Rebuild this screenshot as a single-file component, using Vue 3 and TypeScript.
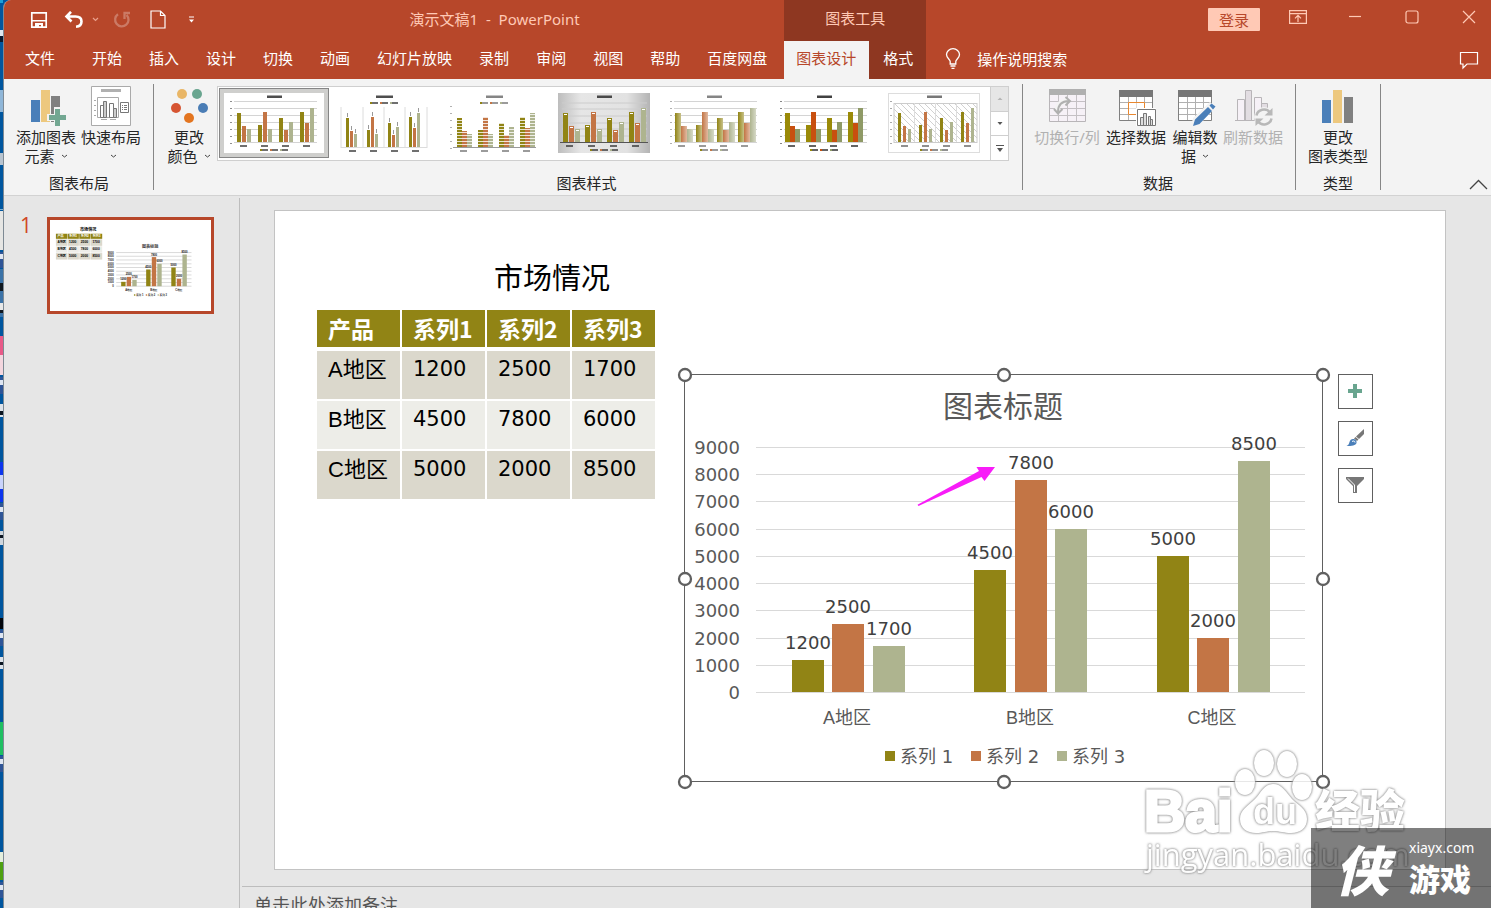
<script setup lang="ts">
import { ref } from 'vue'

interface Tab { label: string; kind?: string }
interface GalleryStyle {
  name: string
  x: number
  w: number
  step: number
  pitch: number
  base: number
  colors: string[]
  grid: 'h' | 'v' | 'none' | 'box'
  top: boolean
  pattern?: 'stripe' | 'notch' | 'fade'
  ink: string
}

const tabs: Tab[] = ['文件', '开始', '插入', '设计', '切换', '动画', '幻灯片放映', '录制', '审阅', '视图', '帮助', '百度网盘']
  .map((label, i) => ({ label, kind: i === 0 ? 'file' : '' }))

const selectedStyle = ref(0)
const notes = ref('')

const colors = ['#918415', '#c37545', '#aeb48f']
const series = ['系列 1', '系列 2', '系列 3']
const headers = ['产品', '系列1', '系列2', '系列3']
const rows = [
  { name: 'A地区', values: [1200, 2500, 1700] },
  { name: 'B地区', values: [4500, 7800, 6000] },
  { name: 'C地区', values: [5000, 2000, 8500] },
]
const ticks = [9000, 8000, 7000, 6000, 5000, 4000, 3000, 2000, 1000, 0]

const BASE = 318
const barH = (v: number) => Math.floor((v * 245) / 9000)
const yOf = (v: number) => BASE - barH(v)
const tickY = (v: number) => BASE - Math.round((v * 245) / 9000)
const barX = (g: number, s: number) => Math.floor(108 + g * 182.5 + s * 40.6)
const groupX = (g: number) => Math.round(163 + g * 182.6)

const handles = [
  [1, 1], [320, 1], [639, 1],
  [1, 205], [639, 205],
  [1, 408], [320, 408], [639, 408],
]

const miniHeights = [[29, 16, 13], [17, 30, 13], [24, 12, 20], [30, 19, 34]]
const strong = ['#9a8a08', '#c8500f', '#8f9a66']
const gallery: GalleryStyle[] = [
  { name: '样式 1', x: 13, w: 4, step: 5, pitch: 21, base: 49, colors, grid: 'h', top: false, ink: '#222' },
  { name: '样式 2', x: 12, w: 3, step: 4, pitch: 21, base: 54, colors, grid: 'v', top: true, ink: '#222' },
  { name: '样式 3', x: 13, w: 5, step: 5, pitch: 21, base: 54, colors, grid: 'none', top: true, pattern: 'stripe', ink: '#666' },
  { name: '样式 4', x: 9, w: 5, step: 6, pitch: 22, base: 49, colors, grid: 'box', top: false, pattern: 'notch', ink: '#222' },
  { name: '样式 5', x: 11, w: 6, step: 6, pitch: 21, base: 49, colors, grid: 'h', top: false, pattern: 'fade', ink: '#666' },
  { name: '样式 6', x: 11, w: 5, step: 5, pitch: 21, base: 49, colors: strong, grid: 'h', top: false, ink: '#111' },
  { name: '样式 7', x: 14, w: 3, step: 5, pitch: 21, base: 49, colors, grid: 'box', top: false, ink: '#555' },
]

const strip = [
  [0, 3, '#1aa0d8'], [30, 10, '#dfe8f0'], [36, 6, '#0a1a30'], [90, 22, '#8fb6d8'], [153, 12, '#b8c4d0'],
  [209, 1, '#7db3d8'], [211, 39, '#e6e6e4'], [252, 16, '#2f5597'], [254, 5, '#dfe6f2'], [269, 48, '#3b73a8'],
  [283, 8, '#101820'], [303, 8, '#e8e8e8'], [310, 3, '#101820'], [336, 20, '#e85a88'], [355, 20, '#f3d6de'],
  [377, 17, '#2f5597'], [380, 5, '#dfe6f2'], [404, 13, '#dde3ea'], [411, 4, '#0a1420'], [462, 40, '#0c35ee'],
  [475, 14, '#c9d3fb'], [503, 17, '#2f5597'], [507, 5, '#dfe6f2'], [531, 14, '#cfd6de'], [535, 3, '#0a1420'],
  [618, 11, '#02060c'], [630, 16, '#2f5597'], [633, 5, '#dfe6f2'], [657, 12, '#dde3ea'], [662, 3, '#0a1420'],
  [722, 33, '#1fbf62'], [756, 16, '#2f5597'], [759, 5, '#dfe6f2'], [852, 12, '#e4eedd'], [862, 18, '#4ea012'],
  [882, 16, '#2f5597'], [885, 5, '#dfe6f2'],
] as [number, number, string][]
</script>

<template>
  <div class="screen">
    <svg class="desktop" viewBox="0 0 3 908" preserveAspectRatio="xMinYMin slice" aria-hidden="true">
      <rect v-for="(s, i) in strip" :key="i" x="0" :y="s[0]" width="3" :height="s[1]" :fill="s[2]" />
    </svg>

    <div class="window">
      <header class="head">
        <div class="head-left">
          <div class="title-row">
            <div class="qat">
              <button type="button" class="q save" aria-label="保存">
                <svg width="18" height="18" viewBox="0 0 18 18"><path d="M1.800 1.800h14.400v14.400H1.800z" fill="none" stroke="#fff" stroke-width="1.700" /><path d="M2 9h14v1.500H2zM5 12h8v5h-2v-3H9v3H5z" fill="#fff" /></svg>
              </button>
              <button type="button" class="q undo" aria-label="撤消">
                <svg width="20" height="18" viewBox="0 0 20 18"><path d="M7 .8 2.500 5.500 7.500 10.500M3 5.500h8.500c4 0 6 2 6 5s-2 5-5.500 5.300" fill="none" stroke="#fff" stroke-width="2.600" /></svg>
              </button>
              <button type="button" class="q more" aria-label="撤消选项">
                <svg width="7" height="5" viewBox="0 0 7 5"><path d="M1 1l2.500 2.500L6 1" fill="none" stroke="#eaa08c" stroke-width="1.200" /></svg>
              </button>
              <button type="button" class="q redo" aria-label="重复" disabled>
                <svg width="18" height="18" viewBox="0 0 18 18"><path d="M5 3.200A6.700 6.700 0 1 0 13.600 4M17 2h-5.500v6" fill="none" stroke="#cb7a65" stroke-width="2.300" /></svg>
              </button>
              <button type="button" class="q doc" aria-label="新建">
                <svg width="16" height="19" viewBox="0 0 16 19"><path d="M1 1h9.500L15 5.500V18H1zM10.500 1v4.500H15" fill="none" stroke="#fff" stroke-width="1.200" /></svg>
              </button>
              <button type="button" class="q custom" aria-label="自定义快速访问工具栏">
                <svg width="7" height="7" viewBox="0 0 7 7"><path d="M1 .5h5v1.100H1zM1 3.500h5L3.500 6.500z" fill="#fff" /></svg>
              </button>
            </div>
            <div class="doc-title">演示文稿1&nbsp; -&nbsp; PowerPoint</div>
          </div>
          <nav class="tab-row">
            <button v-for="t in tabs" :key="t.label" type="button" class="tab" :class="t.kind">{{ t.label }}</button>
          </nav>
        </div>
        <div class="head-context">
          <div class="context-title">图表工具</div>
          <div class="tab-row">
            <button type="button" class="tab active">图表设计</button>
            <button type="button" class="tab">格式</button>
          </div>
        </div>
        <div class="head-right">
          <div class="controls">
            <button type="button" class="login">登录</button>
            <button type="button" class="ctl" aria-label="功能区显示选项">
              <svg width="18" height="14" viewBox="0 0 18 14"><path d="M.6.6h16.800v12.800H.6zM.6 3.600h16.800M9 12V5.500M6 8.300l3-3 3 3" fill="none" stroke="#ffc9b5" stroke-width="1.200" /></svg>
            </button>
            <button type="button" class="ctl" aria-label="最小化">
              <svg width="14" height="14" viewBox="0 0 14 14"><path d="M1 6.500h12" stroke="#ffc9b5" stroke-width="1.200" /></svg>
            </button>
            <button type="button" class="ctl" aria-label="最大化">
              <svg width="14" height="14" viewBox="0 0 14 14"><rect x="1" y="1" width="12" height="12" rx="2" fill="none" stroke="#ffc9b5" stroke-width="1.200" /></svg>
            </button>
            <button type="button" class="ctl" aria-label="关闭">
              <svg width="14" height="14" viewBox="0 0 14 14"><path d="M1 1l12 12M13 1 1 13" stroke="#ffc9b5" stroke-width="1.200" /></svg>
            </button>
          </div>
          <div class="tell-row">
            <button type="button" class="tell">
              <svg width="16" height="22" viewBox="0 0 16 22"><path d="M5.200 16v-2.500C5.200 11.500 1.500 10 1.500 6.500a6.500 5.800 0 0 1 13 0c0 3.500-3.700 5-3.700 7V16zM5.500 18h5M6.500 20.300h3" fill="none" stroke="#fff" stroke-width="1.300" /></svg>
              <span>操作说明搜索</span>
            </button>
            <button type="button" class="comment" aria-label="批注">
              <svg width="20" height="19" viewBox="0 0 20 19"><path d="M1.500 1.500h17v11.500H8L4 17v-4H1.500z" fill="none" stroke="#fff" stroke-width="1.200" /></svg>
            </button>
          </div>
        </div>
      </header>

      <section class="ribbon">
        <div class="group layout">
          <div class="items">
            <button type="button" class="big w64">
              <svg width="40" height="40" viewBox="0 0 40 40"><path d="M5 14h9v22H5z" fill="#4a7fb9" /><path d="M15 4h9v32h-9z" fill="#edc87e" /><path d="M25 10h9v26h-9z" fill="#808080" /><path d="M28 21h7v7h7v7h-7v6h-7v-6h-7v-7h7z" fill="#f3f3f3" /><path d="M29 23h5v6h6v5h-6v6h-5v-6h-6v-5h6z" fill="#72a792" /></svg>
              <span>添加图表</span>
              <span class="l2">元素<svg class="chev" viewBox="0 0 7 5"><path d="M1 1l2.500 2L6 1" /></svg></span>
            </button>
            <button type="button" class="big w66">
              <svg width="40" height="40" viewBox="0 0 40 40"><path d="M.5.500h39v39H.5z" fill="#fff" stroke="#aaa" /><path d="M10 3h20v3H10z" fill="#b0b0b0" /><path d="M6.500 11.500h21v20h-21zM3 14.500h2M3 19.500h2M3 24.500h2M3 29.500h2M10 33.500h6M19 33.500h6" fill="none" stroke="#aaa" /><path d="M9.500 19.500h3v12h-3zM18.500 17.500h4v14h-4z" fill="#fff" stroke="#777" /><path d="M12.500 15.500h3v16h-3zM22.500 22.500h3v9h-3z" fill="#ccc" stroke="#777" /><path d="M29.500 16.500h8v10h-8z" fill="#fff" stroke="#777" /><path d="M31 19.500h1M33 19.500h3M31 21.500h1M33 21.500h3M31 23.500h1M33 23.500h3" stroke="#777" /></svg>
              <span>快速布局</span>
              <span class="l2"><svg class="chev lone" viewBox="0 0 7 5"><path d="M1 1l2.500 2L6 1" /></svg></span>
            </button>
          </div>
          <div class="caption">图表布局</div>
        </div>

        <div class="group styles">
          <div class="items">
            <button type="button" class="big w50">
              <svg width="40" height="40" viewBox="0 0 40 40"><circle cx="13" cy="8" r="5" fill="#e9b666" /><circle cx="28" cy="8" r="5" fill="#69a58f" /><circle cx="7" cy="22" r="5" fill="#d65532" /><circle cx="34" cy="22" r="5" fill="#4a7db5" /><circle cx="20" cy="32" r="5" fill="#e37520" /></svg>
              <span>更改</span>
              <span class="l2">颜色<svg class="chev" viewBox="0 0 7 5"><path d="M1 1l2.500 2L6 1" /></svg></span>
            </button>
            <div class="gallery">
              <button v-for="(g, gi) in gallery" :key="g.name" type="button" class="style-item" :class="{ on: gi === selectedStyle }" :aria-label="g.name" @click="selectedStyle = gi">
                <svg width="100" height="60" viewBox="0 0 100 60">
                  <defs>
                    <linearGradient id="silver" x1="0" x2="1"><stop offset="0" stop-color="#bdbdbd" /><stop offset=".25" stop-color="#e6e6e6" /><stop offset=".75" stop-color="#e2e2e2" /><stop offset="1" stop-color="#b4b4b4" /></linearGradient>
                    <linearGradient id="fade" x1="0" x2="1"><stop offset="0" stop-color="#fff" stop-opacity="0" /><stop offset="1" stop-color="#fff" stop-opacity=".5" /></linearGradient>
                    <pattern id="hatch" width="6" height="6" patternUnits="userSpaceOnUse"><path d="M0 0l6 6" stroke="#ccc" stroke-width=".9" /></pattern>
                  </defs>
                  <rect width="100" height="60" fill="#fff" />
                  <template v-if="gi === 3">
                    <rect x="4" width="92" height="60" fill="url(#silver)" />
                    <path d="M8 10h85M8 16h85M8 23h85M8 30h85M8 36h85M8 43h85" stroke="#ccc" />
                    <path d="M6 49.500h88" stroke="#555" />
                  </template>
                  <template v-if="gi === 6">
                    <rect x="4.500" y=".5" width="91" height="59" fill="#fff" stroke="#ddd" />
                    <rect x="10" y="10.500" width="83" height="39" fill="url(#hatch)" stroke="#ccc" />
                    <path d="M30.500 10v39M51.500 10v39M72.500 10v39" stroke="#ddd" />
                  </template>
                  <path v-if="g.grid === 'h'" d="M10 8.500h83M10 15.500h83M10 22.500h83M10 29.500h83M10 36.500h83M10 42.500h83M10 49.500h83" stroke="#d4d4d4" />
                  <path v-if="g.grid === 'v'" d="M7 14v41M29 14v41M50 14v41M71 14v41M93 14v41M7 54.500h86" stroke="#dcdcdc" />
                  <path v-if="g.grid === 'none'" d="M9 54.500h83" stroke="#999" />
                  <path v-if="gi !== 1 && gi !== 3" d="M7 8v48" :transform="g.top ? 'translate(0 5)' : ''" :stroke="g.ink" stroke-width="2" stroke-dasharray="1 6" opacity=".5" />
                  <template v-for="(hs, k) in miniHeights" :key="k">
                    <template v-for="(h, s) in hs" :key="s">
                      <rect :x="g.x + k * g.pitch + s * g.step" :y="g.base - h" :width="g.w" :height="h" :fill="g.colors[s]" />
                      <rect v-if="g.pattern === 'fade'" :x="g.x + k * g.pitch + s * g.step" :y="g.base - h" :width="g.w" :height="h" fill="url(#fade)" />
                      <rect v-if="g.pattern === 'notch'" :x="g.x + 1 + k * g.pitch + s * g.step" :y="g.base - h + 1" :width="g.w - 2" height="1" fill="#fff" />
                      <path v-if="gi === 1" :d="`M${g.x + 1.5 + k * g.pitch + s * g.step} ${g.base - h - 1}v-4`" stroke="#999" />
                    </template>
                    <rect :x="g.x + 3 + k * g.pitch" :y="g.base + 3" width="7" height="2" :fill="g.ink" opacity=".65" />
                  </template>
                  <path v-if="g.pattern === 'stripe'" d="M10 51.500h84M10 48.500h84M10 45.500h84M10 42.500h84M10 39.500h84M10 36.500h84M10 33.500h84M10 30.500h84M10 27.500h84M10 24.500h84M10 21.500h84" stroke="#fff" stroke-opacity=".8" />
                  <rect :x="g.top ? 42 : 43" y="2.500" :width="g.top ? 17 : 15" height="2.500" :fill="g.ink" opacity=".8" />
                  <g :transform="g.top ? 'translate(0 -47)' : ''">
                    <template v-for="(c, s) in g.colors" :key="c">
                      <rect :x="36 + s * 10" y="56" width="2" height="2" :fill="c" />
                      <rect :x="38 + s * 10" y="56" width="6" height="2" :fill="g.ink" opacity=".65" />
                    </template>
                  </g>
                </svg>
              </button>
              <div class="scroller">
                <button type="button" class="off" aria-label="上一行" disabled><svg width="8" height="5" viewBox="0 0 8 5"><path d="M1.500 4 4 1.500 6.500 4z" fill="#b5b5b5" /></svg></button>
                <button type="button" aria-label="下一行"><svg width="8" height="5" viewBox="0 0 8 5"><path d="M1.500 1h5L4 4z" fill="#555" /></svg></button>
                <button type="button" aria-label="其他"><svg width="10" height="9" viewBox="0 0 10 9"><path d="M1 1h8v1H1zM2 4h6L5 8z" fill="#555" /></svg></button>
              </div>
            </div>
          </div>
          <div class="caption">图表样式</div>
        </div>

        <div class="group data">
          <div class="items">
            <button type="button" class="big w66" disabled>
              <svg width="40" height="40" viewBox="0 0 40 40"><path d="M2.500 3.500h36v32h-36z" fill="#f6f1f7" stroke="#b8b5b8" /><path d="M2 3h37v6H2z" fill="#b0b0b0" /><path d="M11.500 9v26M20.500 9v26M29.500 9v26M3 15.500h35M3 22.500h35M3 29.500h35" stroke="#c4c0c4" /><path d="M10 26c0-7 4-11 11-11" fill="none" stroke="#f3f3f3" stroke-width="5" /><path d="M11 26c0-7 4-11 11-11M18.500 11l4.500 4-4.500 4.500M7 23l4 4.500 4.500-4.500" fill="none" stroke="#b0b0b0" stroke-width="2" /></svg>
              <span>切换行/列</span>
            </button>
            <button type="button" class="big w72">
              <svg width="40" height="40" viewBox="0 0 40 40"><path d="M3.500 4.500h33v30h-33z" fill="#fff" stroke="#808080" /><path d="M3 4h34v7H3z" fill="#777" /><path d="M12.500 11v23M20.500 11v23M28.500 11v23M4 16.500h32M4 22.500h32M4 28.500h32" stroke="#b0b0b0" /><path d="M12.500 16.500h16v12h-16z" fill="#fff" stroke="#e8872f" /><path d="M20.500 17v11M13 22.500h15" stroke="#ddd" /><path d="M20 22h20v18H20z" fill="#fff" /><path d="M21.500 23.500h18v16h-18z" fill="#fff" stroke="#777" /><path d="M24.500 31.500h3v8h-3zM27.500 27.500h3v12h-3zM32.500 30.500h2v9h-2zM34.500 33.500h2v6h-2z" fill="#ddd" stroke="#777" /></svg>
              <span>选择数据</span>
            </button>
            <button type="button" class="big w46">
              <svg width="40" height="40" viewBox="0 0 40 40"><path d="M3.500 4.500h33v30h-33z" fill="#fff" stroke="#808080" /><path d="M3 4h34v7H3z" fill="#777" /><path d="M12.500 11v23M20.500 11v23M28.500 11v23M4 16.500h32M4 22.500h32M4 28.500h32" stroke="#b0b0b0" /><path d="M16 41l2-9 17-16 6 5-16 17z" fill="#f3f3f3" /><path d="M18 40l2-6.500L33 21l4 4-12.500 13zM34.500 19.500l2-2 4 3-2.500 3z" fill="#4a7fb9" /></svg>
              <span>编辑数</span>
              <span class="l2">据<svg class="chev" viewBox="0 0 7 5"><path d="M1 1l2.500 2L6 1" /></svg></span>
            </button>
            <button type="button" class="big w70" disabled>
              <svg width="40" height="40" viewBox="0 0 40 40"><path d="M4.500 13.500h7v21h-7zM21.500 11.500h7v23h-7z" fill="#f6f1f7" stroke="#b8b5b8" /><path d="M12.500 4.500h6v30h-6zM28.500 17.500h6v17h-6z" fill="#e2dde2" stroke="#b8b5b8" /><path d="M2 34.500h34" stroke="#b8b5b8" /><circle cx="31" cy="31" r="10" fill="#f3f3f3" /><path d="M23.500 29.500A7.500 7 0 0 1 37 26.500M38.500 32.500A7.500 7 0 0 1 25 35.500" fill="none" stroke="#b8b8b8" stroke-width="2.500" /><path d="M39.500 22v7.500h-8zM22.500 40v-7.500h8z" fill="#b8b8b8" /></svg>
              <span>刷新数据</span>
            </button>
          </div>
          <div class="caption">数据</div>
        </div>

        <div class="group kind">
          <div class="items">
            <button type="button" class="big w66">
              <svg width="40" height="40" viewBox="0 0 40 40"><path d="M4 14h9v23H4z" fill="#4a7fb9" /><path d="M15 4h9v33h-9z" fill="#edc87e" /><path d="M26 11h9v26h-9z" fill="#808080" /></svg>
              <span>更改</span>
              <span>图表类型</span>
            </button>
          </div>
          <div class="caption">类型</div>
        </div>

        <button type="button" class="collapse" aria-label="折叠功能区">
          <svg width="19" height="11" viewBox="0 0 19 11"><path d="M1 10l8.500-8.500L18 10" fill="none" stroke="#444" stroke-width="1.300" /></svg>
        </button>
      </section>

      <div class="body">
        <aside class="thumbs">
          <span class="num">1</span>
          <button type="button" class="thumb" aria-label="幻灯片 1">
            <svg viewBox="0 0 1172 660" aria-hidden="true">
              <rect width="1172" height="660" fill="#fff" />
              <text x="278" y="80" font-size="30" text-anchor="middle" font-weight="700">市场情况</text>
              <g v-for="(h, i) in headers" :key="h">
                <rect :x="43 + i * 85" y="100" width="82" height="37" fill="#918415" />
                <text :x="54 + i * 85" y="127" font-size="23" font-weight="700" fill="#fff">{{ h }}</text>
              </g>
              <g v-for="(r, k) in rows" :key="r.name">
                <rect v-for="n in 4" :key="n" :x="43 + (n - 1) * 85" :y="141 + k * 50" width="82" height="47" :fill="k === 1 ? '#edede8' : '#dbd8cc'" />
                <text x="54" :y="168 + k * 50" font-size="23" font-weight="700">{{ r.name }}</text>
                <text v-for="(v, j) in r.values" :key="j" :x="139 + j * 85" :y="168 + k * 50" font-size="24" font-weight="700">{{ v }}</text>
              </g>
              <g transform="translate(410 164)">
                <text x="319" y="43" font-size="30" text-anchor="middle" font-weight="700" fill="#444">图表标题</text>
                <g v-for="t in ticks" :key="t">
                  <path :d="`M72 ${tickY(t)}h548`" stroke="#d9d9d9" stroke-width="7" />
                  <text x="55" :y="tickY(t) + 7" font-size="20" text-anchor="end" font-weight="700" fill="#222">{{ t }}</text>
                </g>
                <g v-for="(r, k) in rows" :key="r.name">
                  <rect v-for="(v, s) in r.values" :key="s" :x="barX(k, s)" :y="yOf(v)" width="32" :height="barH(v)" :fill="colors[s]" />
                  <text v-for="(v, s) in r.values" :key="'t' + s" :x="barX(k, s) + 16" :y="yOf(v) - 11" font-size="20" text-anchor="middle" font-weight="700" fill="#111">{{ v }}</text>
                  <text :x="groupX(k)" y="350" font-size="19" text-anchor="middle" font-weight="700" fill="#222">{{ r.name }}</text>
                </g>
                <g v-for="(n, s) in series" :key="n">
                  <rect :x="201 + s * 86" y="377" width="10" height="10" :fill="colors[s]" />
                  <text :x="216 + s * 86" y="389" font-size="19" font-weight="700" fill="#222">{{ n }}</text>
                </g>
              </g>
            </svg>
          </button>
        </aside>

        <main class="editor">
          <div class="stage">
            <div class="slide">
              <h1 class="slide-title">市场情况</h1>
              <table class="sheet">
                <thead>
                  <tr><th v-for="h in headers" :key="h" scope="col">{{ h }}</th></tr>
                </thead>
                <tbody>
                  <tr v-for="r in rows" :key="r.name">
                    <td class="name">{{ r.name }}</td>
                    <td v-for="(v, j) in r.values" :key="j">{{ v }}</td>
                  </tr>
                </tbody>
              </table>
              <svg class="chart" width="639" height="408" viewBox="0 0 639 408">
                <rect x=".5" y=".5" width="638" height="407" fill="#fff" stroke="#606060" />
                <text class="c-title" x="319" y="43">图表标题</text>
                <g v-for="t in ticks" :key="t">
                  <rect x="72" :y="tickY(t)" width="549" height="1" fill="#d9d9d9" />
                  <text class="c-axis" x="56" :y="tickY(t) + 7">{{ t }}</text>
                </g>
                <g v-for="(r, k) in rows" :key="r.name">
                  <rect v-for="(v, s) in r.values" :key="s" :x="barX(k, s)" :y="yOf(v)" width="32" :height="barH(v)" :fill="colors[s]" />
                  <text v-for="(v, s) in r.values" :key="'t' + s" class="c-value" :x="barX(k, s) + 16" :y="yOf(v) - 11">{{ v }}</text>
                  <text class="c-name" :x="groupX(k)" y="350">{{ r.name }}</text>
                </g>
                <g v-for="(n, s) in series" :key="n">
                  <rect :x="201 + s * 86" y="377" width="10" height="10" :fill="colors[s]" />
                  <text class="c-legend" :x="216 + s * 86" y="389">{{ n }}</text>
                </g>
                <path d="M233.500 130.800 295 97l-2.500-4H311l-10.500 14-3-4-63 29z" fill="#f81cf8" />
                <circle v-for="(h, i) in handles" :key="'h' + i" :cx="h[0]" :cy="h[1]" r="6" fill="#fff" stroke="#606060" stroke-width="2.300" />
              </svg>
              <div class="side">
                <button type="button" aria-label="图表元素"><svg width="20" height="20" viewBox="0 0 20 20"><path d="M7 2h4v5h5v4h-5v5H7v-5H2V7h5z" fill="#69a58f" /></svg></button>
                <button type="button" aria-label="图表样式"><svg width="20" height="20" viewBox="0 0 20 20"><path d="M18 0v5l-5 5-3-2.500zM9.500 8l3 2.500-1.500 1.500-3-2.500z" fill="#777" /><path d="M7 10c2 0 4 1.500 3.500 4-.5 2.500-5 3-10 3 2-1 2.500-2 3-4 .5-2 1.800-3 3.500-3z" fill="#4a7fb9" /><path d="M6 12.500c1.500-1 3-.5 3 1" fill="none" stroke="#fff" /></svg></button>
                <button type="button" aria-label="图表筛选器"><svg width="20" height="20" viewBox="0 0 20 20"><path d="M0 1h18v2l-7 7v7H7v-7L0 3z" fill="#777" /><path d="M2 2.500l6.500 6.500v7" fill="none" stroke="#fff" /></svg></button>
              </div>
            </div>
          </div>
          <textarea v-model="notes" class="notes" placeholder="单击此处添加备注" aria-label="备注" rows="1"></textarea>
        </main>
      </div>
    </div>

    <svg class="mark" width="371" height="178" viewBox="0 0 371 178" aria-hidden="true">
      <g class="ghost">
        <text class="heavy" x="24" y="101" font-size="57" font-weight="700">Bai</text>
        <ellipse cx="125" cy="52" rx="10" ry="13" />
        <ellipse cx="144" cy="33" rx="10" ry="13" />
        <ellipse cx="167" cy="34" rx="10" ry="13" />
        <ellipse cx="182" cy="57" rx="10" ry="13" />
        <path d="M153 54c-9 0-12 9-18 15-7 7-15 11-15 20 0 9 7 14 16 14 7 0 10-2 17-2s11 2 18 2c9 0 16-5 16-14 0-10-9-14-15-20-6-7-10-15-19-15z" />
        <text x="133" y="94" font-size="36" font-weight="700">du</text>
        <text class="cjk" x="195" y="98" font-size="45" font-weight="900">经验</text>
        <text class="url" x="26" y="136" font-size="31">jingyan.baidu.com</text>
      </g>
    </svg>
    <div class="badge">
      <span class="logo">侠</span>
      <span class="badge-text"><span class="site">xiayx.com</span><span class="game">游戏</span></span>
    </div>
  </div>
</template>

<style>
body { margin: 0; overflow: hidden; }
</style>

<style scoped>
.screen { position: relative; display: flex; height: 100vh; overflow: hidden; background: #00569f; font-family: "Noto Sans", "Noto Sans CJK SC", sans-serif; font-size: 15px; color: #262626; }
button { font: inherit; color: inherit; background: none; border: 0; padding: 0; margin: 0; display: flex; align-items: center; justify-content: center; }
svg { display: block; flex: none; }
.desktop { width: 3px; height: 100%; }
.window { flex: 1; min-width: 0; display: flex; flex-direction: column; border-left: 1px solid #7e8a94; background: #e6e6e6; border-top-left-radius: 8px; overflow: hidden; }

.head { display: flex; background: #b7472a; color: #fff; }
.head-left { display: flex; flex-direction: column; }
.title-row { display: flex; height: 41px; align-items: center; }
.qat { display: flex; align-items: center; width: 204px; height: 36px; padding-bottom: 2px; box-sizing: border-box; }
.q { height: 24px; }
.save { margin-left: 26px; }
.undo { margin-left: 16px; }
.more { margin-left: 8px; }
.redo { margin-left: 14px; }
.doc { margin-left: 19px; }
.custom { margin-left: 22px; }
.doc-title { flex: 1; text-align: center; color: #ffc9b5; line-height: 38px; height: 41px; }
.tab-row { display: flex; height: 38px; }
.tab { padding: 0 14px 0 13px; line-height: 34px; align-items: flex-start; white-space: nowrap; }
.tab.file { padding: 0 24px 0 21px; }
.head-context { background: #8e3721; display: flex; flex-direction: column; margin-left: 3px; }
.context-title { height: 41px; line-height: 36px; text-align: center; color: #ffc9b5; }
.head-context .tab { padding: 0 13px 0 12px; }
.head-context .tab + .tab { padding: 0 13px 0 14px; }
.tab.active { background: #f3f3f3; color: #b7472a; }
.head-right { flex: 1; display: flex; flex-direction: column; }
.controls { display: flex; justify-content: flex-end; gap: 13px; height: 41px; }
.login { width: 52px; height: 23px; margin: 8px 3px 0 0; background: #ffc9b5; color: #b7472a; border-radius: 1px; }
.ctl { width: 44px; height: 34px; }
.tell-row { display: flex; justify-content: space-between; height: 38px; padding: 0 12px 0 19px; }
.tell { gap: 16px; height: 36px; }
.tell span { line-height: 20px; }
.comment { height: 38px; }

.ribbon { display: flex; height: 116px; background: #f3f3f3; border-bottom: 1px solid #d2d2d2; }
.group { display: flex; flex-direction: column; justify-content: space-between; margin: 5px 0; padding-top: 2px; border-right: 1px solid #868686; box-sizing: border-box; }
.layout { padding-left: 10px; padding-right: 9px; }
.styles { padding-left: 10px; padding-right: 13px; }
.data { padding-left: 11px; padding-right: 7px; }
.kind { padding-left: 9px; padding-right: 9px; }
.items { display: flex; align-items: flex-start; }
.caption { text-align: center; line-height: 14px; }
.data .caption { padding-right: 6px; }
.big { flex-direction: column; justify-content: flex-start; line-height: 19px; white-space: nowrap; }
.big > svg { margin-bottom: 2px; overflow: visible; }
.big:disabled { color: #b1b1b1; }
.l2 { display: flex; align-items: center; gap: 6px; height: 19px; }
.chev { width: 7px; height: 5px; fill: none; stroke: #444; stroke-width: 1; }
.chev.lone { margin-left: 4px; }
.w46 { width: 46px; }
.w50 { width: 50px; }
.w64 { width: 64px; }
.w66 { width: 66px; }
.w70 { width: 70px; }
.w72 { width: 72px; }
.gallery { display: flex; margin-left: 3px; height: 75px; box-sizing: border-box; border: 1px solid #cfcfcf; background: #fff; padding-left: 1px; }
.style-item { width: 110px; height: 70px; margin-top: 1px; box-sizing: border-box; }
.style-item.on { border: 1px solid #868686; background: #cfcfcd; }
.scroller { display: flex; flex-direction: column; width: 18px; border-left: 1px solid #cfcfcf; margin-left: 1px; box-sizing: border-box; }
.scroller button { flex: 1; }
.scroller button + button { border-top: 1px solid #cfcfcf; }
.scroller .off { background: #e6e6e6; }
.collapse { margin: auto 3px 5px auto; }

.body { flex: 1; min-height: 0; display: flex; }
.thumbs { width: 235px; margin-top: 2px; border-right: 1px solid #bdbdbd; display: flex; align-items: flex-start; box-sizing: content-box; }
.num { width: 43px; box-sizing: border-box; padding-left: 16px; margin-top: 12px; font: 21px/30px "Open Sans", sans-serif; color: #d04727; }
.thumb { width: 167px; margin-top: 19px; border: 3px solid #b7472a; box-sizing: border-box; background: #fff; }
.thumb svg { width: 100%; height: auto; font-family: "Liberation Sans", "Noto Sans CJK SC", sans-serif; }
.editor { flex: 1; min-width: 0; display: flex; flex-direction: column; }
.stage { flex: 1; min-height: 0; display: flex; padding: 14px 45px 16px 34px; }
.slide { position: relative; flex: 1; background: #fff; border: 1px solid #c3c3c3; font-family: "Liberation Sans", "Noto Sans CJK SC", sans-serif; color: #000; }
.slide-title { position: absolute; left: 219px; top: 48px; margin: 0; font-size: 29px; line-height: 40px; font-weight: 400; }
.sheet { position: absolute; left: 42px; top: 99px; width: 340px; border-collapse: separate; border-spacing: 0; table-layout: fixed; }
.sheet th, .sheet td { padding: 0 0 0 11px; text-align: left; vertical-align: top; border-right: 2px solid #fff; border-bottom: 2px solid #fff; }
.sheet th { height: 37px; line-height: 37px; background: #918415; color: #fff; font-family: "Noto Sans CJK SC", sans-serif; font-size: 23px; border-bottom-width: 4px; }
.sheet td { height: 48px; line-height: 37px; font-family: "DejaVu Sans", sans-serif; font-size: 21px; background: #dbd8cc; }
.sheet td.name { font-family: "Liberation Sans", "Noto Sans CJK SC", sans-serif; font-size: 22px; }
.sheet tr:nth-child(2) td { background: #edede8; }
.chart { position: absolute; left: 409px; top: 163px; overflow: visible; fill: #595959; }
.c-title { font-size: 30px; text-anchor: middle; }
.c-axis { font-family: "DejaVu Sans", sans-serif; font-size: 18px; text-anchor: end; }
.c-value { font-family: "DejaVu Sans", sans-serif; font-size: 18px; text-anchor: middle; fill: #404040; }
.c-name { font-size: 18px; text-anchor: middle; }
.c-legend { font-family: "DejaVu Sans", "Noto Sans CJK SC", sans-serif; font-size: 18px; }
.side { position: absolute; left: 1063px; top: 163px; display: flex; flex-direction: column; gap: 12px; }
.side button { width: 35px; height: 35px; background: #fff; border: 1px solid #606060; box-sizing: border-box; }
.notes { height: 22px; margin-left: 2px; box-sizing: border-box; border: 0; border-top: 1px solid #bdbdbd; padding: 3px 12px 0; background: transparent; resize: none; overflow: hidden; outline: 0; font: 18px/28px "Noto Sans CJK SC", sans-serif; color: #333; }
.notes::placeholder { color: #555; opacity: 1; }

.mark { position: absolute; right: 0; bottom: 0; pointer-events: none; }
.ghost { fill: #fff; opacity: .85; font-family: "Liberation Sans", sans-serif; }
.ghost > * { filter: drop-shadow(0 0 1px #777) drop-shadow(0 0 1px #bbb); }
.heavy { stroke: #fff; stroke-width: 3; }
.cjk { font-family: "Noto Sans CJK SC", sans-serif; }
.url { font-family: "Open Sans", sans-serif; }
.badge { position: absolute; right: 0; bottom: 0; width: 180px; height: 80px; box-sizing: border-box; padding-left: 24px; display: flex; align-items: center; gap: 20px; background: rgba(0, 0, 0, .5); color: #fff; }
.logo { font: italic 900 54px/78px "Noto Sans CJK SC", sans-serif; }
.badge-text { display: flex; flex-direction: column; }
.site { font-size: 14px; line-height: 20px; }
.game { font: 900 31px/40px "Noto Sans CJK SC", sans-serif; }
</style>
